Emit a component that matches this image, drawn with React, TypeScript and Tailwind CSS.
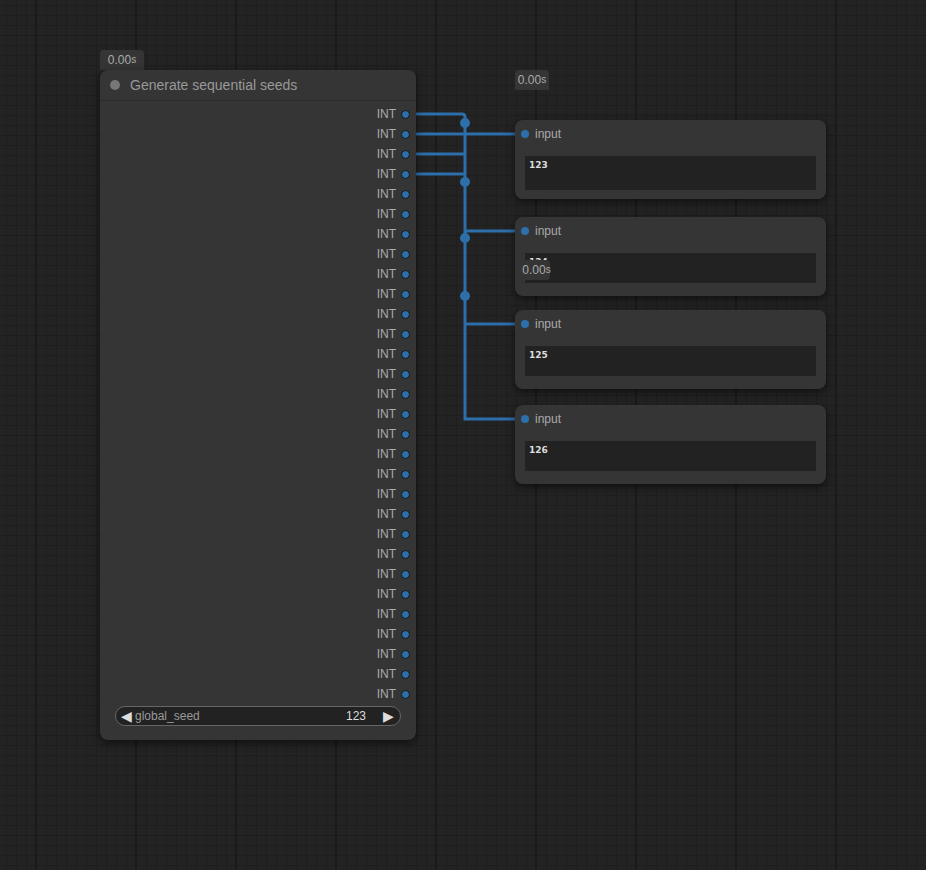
const SLOT_COUNT = 30;

function Badge({ className }: { className: string }) {
  return (
    <div
      className={`absolute h-[20px] rounded-t-[4px] bg-[#353535] text-[#aaa] flex items-center justify-center text-[12px] leading-none ${className}`}
    >
      0.00<span className="text-[10px]">s</span>
    </div>
  );
}

function SeedNode() {
  return (
    <div className="absolute left-[100px] top-[70px] w-[316px] h-[670px] rounded-[8px] bg-[#353535] shadow-[0_3px_8px_rgba(0,0,0,0.55)] flex flex-col">
      <div className="h-[31px] flex items-center pl-[10px] gap-[10px] border-b border-[#2b2b2b]">
        <div className="w-[10px] h-[10px] rounded-full bg-[#777]" />
        <span className="text-[14px] text-[#999]">Generate sequential seeds</span>
      </div>
      <div className="flex flex-col items-end pt-[3px] pr-[6px]">
        {Array.from({ length: SLOT_COUNT }).map((_, i) => (
          <div key={i} className="h-[20px] flex items-center gap-[5px]">
            <span className="text-[12px] text-[#aaa]">INT</span>
            <div className="w-[9px] h-[9px] rounded-full bg-[#2d6fab] border border-[#151515]" />
          </div>
        ))}
      </div>
      <div className="mx-[15px] mt-[2px] h-[20px] rounded-full bg-[#222] border border-[#666] flex items-center pl-[5px] pr-[6px] text-[12px]">
        <span className="text-[#ddd] text-[14px] leading-none">◀</span>
        <span className="ml-[3px] text-[#999]">global_seed</span>
        <span className="ml-auto text-[#ddd]">123</span>
        <span className="ml-[17px] text-[#ddd] text-[14px] leading-none">▶</span>
      </div>
    </div>
  );
}

function InputNode({
  top,
  value,
  boxHeight,
}: {
  top: string;
  value: string;
  boxHeight: string;
}) {
  return (
    <div
      className={`absolute left-[515px] w-[311px] h-[79px] rounded-[8px] bg-[#353535] shadow-[0_3px_8px_rgba(0,0,0,0.55)] flex flex-col ${top}`}
    >
      <div className="h-[28px] flex items-center pl-[6px] gap-[6px]">
        <div className="w-[8px] h-[8px] rounded-full bg-[#2d6fab]" />
        <span className="text-[12px] text-[#aaa]">input</span>
      </div>
      <div className={`mx-[10px] mt-[8px] bg-[#222] px-[4px] pt-[4px] ${boxHeight}`}>
        <div className="font-['DejaVu_Sans',sans-serif] font-bold text-[9px] leading-[11px] text-[#ddd]">{value}</div>
      </div>
    </div>
  );
}

export default function App() {
  return (
    <div className="relative w-[926px] h-[870px] overflow-hidden font-['Liberation_Sans',Arial,sans-serif] bg-[#232323] bg-[linear-gradient(to_right,#1a1a1a_2px,transparent_2px),linear-gradient(to_bottom,#1c1c1c_1px,transparent_1px),linear-gradient(to_right,#1e1e1e_1px,transparent_1px),linear-gradient(to_bottom,#1e1e1e_1px,transparent_1px)] bg-[size:100px_100px,100px_100px,10px_10px,10px_10px] bg-[position:35px_35px,36px_35px,6px_5px,6px_5px]">
      <svg className="absolute inset-0 pointer-events-none" width="926" height="870">
        <g stroke="#2d6fab" strokeWidth="3" fill="none">
          <path d="M408 114 H462 Q465 114 465 117 V419 H522" />
          <path d="M408 134 H522" />
          <path d="M408 154 H465" />
          <path d="M408 174 H465" />
          <path d="M465 231 H522" />
          <path d="M465 324 H522" />
        </g>
        <g fill="#2d6fab">
          <circle cx="465" cy="123" r="5" />
          <circle cx="465" cy="182" r="5" />
          <circle cx="465" cy="238" r="5" />
          <circle cx="465" cy="296" r="5" />
        </g>
      </svg>

      <Badge className="left-[100px] top-[50px] w-[44px]" />
      <SeedNode />

      <Badge className="left-[515px] top-[70px] w-[34px]" />
      <InputNode top="top-[120px]" value="123" boxHeight="h-[34px]" />
      <InputNode top="top-[217px]" value="124" boxHeight="h-[30px]" />
      <InputNode top="top-[310px]" value="125" boxHeight="h-[30px]" />
      <InputNode top="top-[405px]" value="126" boxHeight="h-[30px]" />

      <Badge className="left-[523px] top-[260px] w-[27px] rounded-[4px]" />
    </div>
  );
}
